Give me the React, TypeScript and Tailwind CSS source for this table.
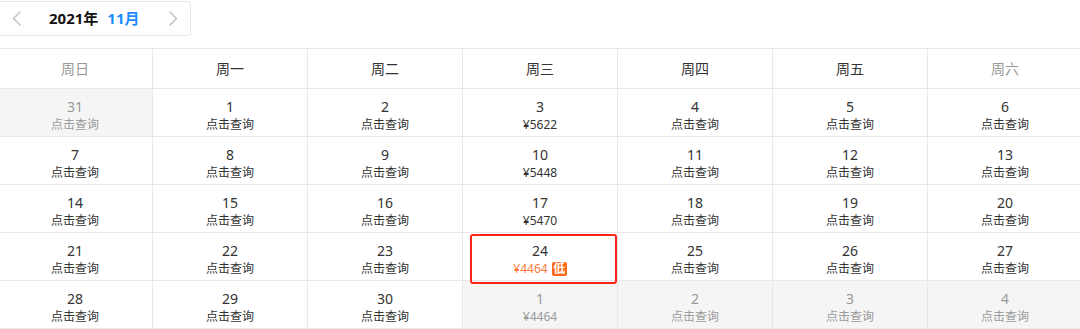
import React from "react";

type Cell = { d: string; sub: string; out?: boolean; hl?: boolean };

const heads = ["周日", "周一", "周二", "周三", "周四", "周五", "周六"];
const q = "点击查询";
const rows: Cell[][] = [
  [
    { d: "31", sub: q, out: true },
    { d: "1", sub: q },
    { d: "2", sub: q },
    { d: "3", sub: "¥5622" },
    { d: "4", sub: q },
    { d: "5", sub: q },
    { d: "6", sub: q },
  ],
  [
    { d: "7", sub: q },
    { d: "8", sub: q },
    { d: "9", sub: q },
    { d: "10", sub: "¥5448" },
    { d: "11", sub: q },
    { d: "12", sub: q },
    { d: "13", sub: q },
  ],
  [
    { d: "14", sub: q },
    { d: "15", sub: q },
    { d: "16", sub: q },
    { d: "17", sub: "¥5470" },
    { d: "18", sub: q },
    { d: "19", sub: q },
    { d: "20", sub: q },
  ],
  [
    { d: "21", sub: q },
    { d: "22", sub: q },
    { d: "23", sub: q },
    { d: "24", sub: "¥4464", hl: true },
    { d: "25", sub: q },
    { d: "26", sub: q },
    { d: "27", sub: q },
  ],
  [
    { d: "28", sub: q },
    { d: "29", sub: q },
    { d: "30", sub: q },
    { d: "1", sub: "¥4464", out: true },
    { d: "2", sub: q, out: true },
    { d: "3", sub: q, out: true },
    { d: "4", sub: q, out: true },
  ],
];

const font = { fontFamily: '"Noto Sans", "Noto Sans CJK SC", sans-serif' };

function Chevron({ dir }: { dir: "l" | "r" }) {
  return (
    <svg width="9" height="15" viewBox="0 0 9 15" fill="none">
      <path
        d={dir === "l" ? "M8 1 L1.5 7.5 L8 14" : "M1 1 L7.5 7.5 L1 14"}
        stroke="#c4c4c4"
        strokeWidth="1.6"
        strokeLinecap="round"
        strokeLinejoin="round"
      />
    </svg>
  );
}

export default function App() {
  return (
    <div className="w-[1080px] h-[329px] overflow-hidden bg-white pt-[1px]" style={font}>
      <div className="ml-[-10px] w-[201px] h-[35px] border border-[#e6e6e6] rounded-[4px] flex items-center">
        <div className="ml-[21px] flex items-center">
          <Chevron dir="l" />
        </div>
        <div className="ml-[28px] flex items-baseline font-bold text-[15px] leading-none">
          <span className="text-[#111]">2021年</span>
          <span className="ml-[9px] text-[#1a8cff]">11月</span>
        </div>
        <div className="ml-[29px] flex items-center">
          <Chevron dir="r" />
        </div>
      </div>

      <div className="mt-[12px] ml-[-2px] w-[1085px] border-t border-[#e8e8e8]">
        <div className="grid grid-cols-[repeat(7,155px)]">
          {heads.map((h, i) => (
            <div
              key={h}
              className={`h-[40px] border-b border-r border-[#e8e8e8] flex items-center justify-center text-[14px] ${
                i === 0 || i === 6 ? "text-[#999]" : "text-[#333]"
              }`}
            >
              {h}
            </div>
          ))}
          {rows.map((r, ri) =>
            r.map((c, ci) => (
              <div
                key={`${ri}-${ci}`}
                className={`relative h-[48px] border-b border-r border-[#e8e8e8] flex flex-col items-center pt-[9px] ${
                  c.out ? "bg-[#f5f5f5]" : "bg-white"
                } ${c.hl ? "z-10" : ""}`}
              >
                <div
                  className={`text-[14px] leading-[18px] ${c.out ? "text-[#9a9a9a]" : "text-[#333]"}`}
                >
                  {c.d}
                </div>
                {c.hl ? (
                  <div className="mt-[1px] flex items-center leading-4">
                    <span className="text-[12px] text-[#ff7a3d]">{c.sub}</span>
                    <span className="ml-[4px] w-[15px] h-[14px] rounded-[2px] bg-[#ff6a1a] text-white text-[12px] font-bold flex items-center justify-center leading-none">
                      低
                    </span>
                  </div>
                ) : (
                  <div
                    className={`mt-[1px] text-[12px] leading-4 ${c.out ? "text-[#9a9a9a]" : "text-[#333]"}`}
                  >
                    {c.sub}
                  </div>
                )}
                {c.hl && (
                  <div className="absolute left-[7px] right-[0px] top-[1px] h-[50px] border-[2.5px] border-[#ff2418] rounded-[3px] pointer-events-none" />
                )}
              </div>
            ))
          )}
        </div>
      </div>
    </div>
  );
}
